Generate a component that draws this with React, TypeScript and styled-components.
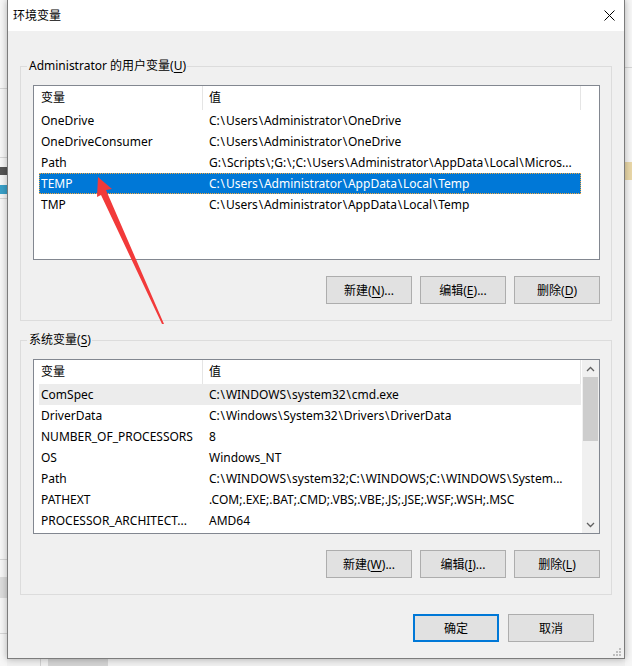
import styled, { createGlobalStyle } from 'styled-components'

const GlobalStyle = createGlobalStyle`
  html, body {
    margin: 0;
    padding: 0;
    background: #f2f2f2;
  }
  body {
    font-family: 'Noto Sans', 'Noto Sans CJK SC', sans-serif;
    font-size: 12px;
    color: #000;
  }
`

type RowState = 'selected' | 'inactive'

type EnvVar = {
  name: string
  value: string
  state?: RowState
}

type Label = {
  text: string
  hotkey: string
  suffix?: string
}

const userVars: EnvVar[] = [
  { name: 'OneDrive', value: 'C:\\Users\\Administrator\\OneDrive' },
  { name: 'OneDriveConsumer', value: 'C:\\Users\\Administrator\\OneDrive' },
  { name: 'Path', value: 'G:\\Scripts\\;G:\\;C:\\Users\\Administrator\\AppData\\Local\\Micros...' },
  { name: 'TEMP', value: 'C:\\Users\\Administrator\\AppData\\Local\\Temp', state: 'selected' },
  { name: 'TMP', value: 'C:\\Users\\Administrator\\AppData\\Local\\Temp' },
]

const systemVars: EnvVar[] = [
  { name: 'ComSpec', value: 'C:\\WINDOWS\\system32\\cmd.exe', state: 'inactive' },
  { name: 'DriverData', value: 'C:\\Windows\\System32\\Drivers\\DriverData' },
  { name: 'NUMBER_OF_PROCESSORS', value: '8' },
  { name: 'OS', value: 'Windows_NT' },
  { name: 'Path', value: 'C:\\WINDOWS\\system32;C:\\WINDOWS;C:\\WINDOWS\\System...' },
  { name: 'PATHEXT', value: '.COM;.EXE;.BAT;.CMD;.VBS;.VBE;.JS;.JSE;.WSF;.WSH;.MSC' },
  { name: 'PROCESSOR_ARCHITECT...', value: 'AMD64' },
]

const Desktop = styled.div`
  position: relative;
  display: grid;
  grid-template-columns: 7px 618px 7px;
  grid-template-rows: 659px 7px;
  width: 632px;
  height: 666px;
  overflow: hidden;
  background: #f4f4f4;
`

const LeftStrip = styled.div`
  grid-column: 1;
  grid-row: 1 / 3;
  display: flex;
  flex-direction: column;
  background: #f6f6f6;
`

const RightStrip = styled.div`
  grid-column: 3;
  grid-row: 1 / 3;
  display: flex;
  flex-direction: column;
  background: #f6f6f6;
`

const BottomStrip = styled.div`
  grid-column: 2;
  grid-row: 2;
  display: flex;
  background: #f0f0f0;
`

const StripLine = styled.div<{ $top: number }>`
  margin-top: ${p => p.$top}px;
  height: 1px;
  background: #d6d6d6;
  flex-shrink: 0;
`

const StripBlock = styled.div<{ $top: number; $height: number; $color: string }>`
  margin-top: ${p => p.$top}px;
  height: ${p => p.$height}px;
  background: ${p => p.$color};
  flex-shrink: 0;
`

const BottomBlock = styled.div<{ $left: number; $width: number; $color: string }>`
  margin-left: ${p => p.$left}px;
  width: ${p => p.$width}px;
  background: ${p => p.$color};
  flex-shrink: 0;
`

const WindowFrame = styled.div`
  grid-column: 2;
  grid-row: 1;
  position: relative;
  z-index: 1;
  display: flex;
  flex-direction: column;
  border: 1px solid #7c7c7c;
  border-top: none;
  background: #f0f0f0;
  box-shadow: 0 0 7px rgba(0, 0, 0, 0.3);
`

const TitleBar = styled.div`
  display: flex;
  align-items: center;
  justify-content: space-between;
  height: 31px;
  padding: 0 9px 0 5px;
  background: #fff;
  flex-shrink: 0;
`

const Title = styled.span`
  font-size: 12px;
  line-height: 16px;
`

const Body = styled.div`
  display: flex;
  flex-direction: column;
  flex: 1;
  padding: 27px 12px 16px 12px;
`

const Group = styled.fieldset`
  margin: 0;
  padding: 0;
  min-width: 0;
  border: 1px solid #dcdcdc;

  & + & {
    margin-top: 11px;
  }
`

const Legend = styled.legend`
  margin-left: 6px;
  padding: 0 1px 0 2px;
  font-size: 12px;
  line-height: 16px;
`

const GroupBody = styled.div`
  display: flex;
  flex-direction: column;
  gap: 16px;
  padding: 11px 11px 16px 12px;
`

const Hotkey = styled.span`
  text-decoration: underline;
  text-underline-offset: 2px;
`

const ListBox = styled.div`
  display: flex;
  height: 175px;
  box-sizing: border-box;
  border: 1px solid #828790;
  background: #fff;
  overflow: hidden;
`

const ListMain = styled.div`
  display: flex;
  flex-direction: column;
  flex: 1;
  min-width: 0;
`

const Header = styled.div`
  display: flex;
  height: 24px;
  flex-shrink: 0;
`

const HeaderCell = styled.div<{ $width: number; $pad: number }>`
  width: ${p => p.$width}px;
  box-sizing: border-box;
  padding-left: ${p => p.$pad}px;
  border-right: 1px solid #e5e5e5;
  line-height: 23px;
  flex-shrink: 0;
`

const Row = styled.div<{ $state?: RowState }>`
  display: grid;
  grid-template-columns: 168px 374px;
  width: 542px;
  height: 21px;
  margin-left: 5px;
  box-sizing: border-box;
  line-height: 21px;
  flex-shrink: 0;
  background: ${p => (p.$state === 'selected' ? '#0078d7' : p.$state === 'inactive' ? '#ececec' : 'transparent')};
  color: ${p => (p.$state === 'selected' ? '#fff' : '#000')};
  outline: ${p => (p.$state === 'selected' ? '1px dotted #f3a73f' : 'none')};
  outline-offset: -1px;
`

const Cell = styled.span`
  padding-left: 2px;
  white-space: nowrap;
  overflow: hidden;
`

// the dialog font draws a wider backslash than Noto Sans
const Slash = styled.span`
  padding: 0 0.8px;
`

const Scrollbar = styled.div`
  display: flex;
  flex-direction: column;
  align-items: center;
  width: 17px;
  flex-shrink: 0;
  background: #f0f0f0;
`

const ScrollArrow = styled.div`
  display: flex;
  align-items: center;
  justify-content: center;
  width: 17px;
  height: 17px;
  flex-shrink: 0;
`

const ScrollThumb = styled.div`
  width: 15px;
  height: 64px;
  background: #cdcdcd;
  flex-shrink: 0;
`

const ScrollTrack = styled.div`
  flex: 1;
`

const ButtonRow = styled.div`
  display: flex;
  justify-content: flex-end;
  gap: 8px;
`

const Footer = styled.div`
  display: flex;
  justify-content: flex-end;
  gap: 9px;
  margin-top: 19px;
  padding-right: 18px;
`

const Button = styled.button<{ $primary?: boolean }>`
  width: 86px;
  height: 28px;
  padding: 0;
  box-sizing: border-box;
  border: ${p => (p.$primary ? '2px solid #0078d7' : '1px solid #adadad')};
  background: #e1e1e1;
  font-family: inherit;
  font-size: 12px;
  color: #000;
`

const Grip = styled.svg`
  position: absolute;
  right: 3px;
  bottom: 2px;
`

const ArrowLayer = styled.svg`
  position: absolute;
  left: 0;
  top: 0;
  z-index: 3;
  pointer-events: none;
`

function LabelText({ label }: { label: Label }) {
  return (
    <>
      {label.text}(<Hotkey>{label.hotkey}</Hotkey>){label.suffix}
    </>
  )
}

function PathText({ value }: { value: string }) {
  const parts = value.split('\\')
  return (
    <>
      {parts.map((part, i) => (
        <span key={i}>
          {part}
          {i < parts.length - 1 && <Slash>\</Slash>}
        </span>
      ))}
    </>
  )
}

function Chevron({ up }: { up?: boolean }) {
  return (
    <svg width="9" height="6" viewBox="0 0 9 6">
      <polyline
        points={up ? '1,5 4.5,1.5 8,5' : '1,1 4.5,4.5 8,1'}
        fill="none"
        stroke="#606060"
        strokeWidth="1.3"
      />
    </svg>
  )
}

function VarList({ vars, scroll }: { vars: EnvVar[]; scroll?: boolean }) {
  return (
    <ListBox>
      <ListMain>
        <Header>
          <HeaderCell $width={169} $pad={7}>变量</HeaderCell>
          <HeaderCell $width={378} $pad={6}>值</HeaderCell>
        </Header>
        {vars.map(v => (
          <Row key={v.name + v.value} $state={v.state}>
            <Cell>{v.name}</Cell>
            <Cell>
              <PathText value={v.value} />
            </Cell>
          </Row>
        ))}
      </ListMain>
      {scroll && (
        <Scrollbar>
          <ScrollArrow>
            <Chevron up />
          </ScrollArrow>
          <ScrollThumb />
          <ScrollTrack />
          <ScrollArrow>
            <Chevron />
          </ScrollArrow>
        </Scrollbar>
      )}
    </ListBox>
  )
}

function VarGroup({ legend, vars, buttons, scroll }: { legend: Label; vars: EnvVar[]; buttons: Label[]; scroll?: boolean }) {
  return (
    <Group>
      <Legend>
        <LabelText label={legend} />
      </Legend>
      <GroupBody>
        <VarList vars={vars} scroll={scroll} />
        <ButtonRow>
          {buttons.map(b => (
            <Button key={b.hotkey}>
              <LabelText label={b} />
            </Button>
          ))}
        </ButtonRow>
      </GroupBody>
    </Group>
  )
}

export default function App() {
  return (
    <>
      <GlobalStyle />
      <Desktop>
        <LeftStrip>
          <StripLine $top={88} />
          <StripLine $top={68} />
          <StripBlock $top={9} $height={8} $color="#555" />
          <StripBlock $top={10} $height={9} $color="#3aa0c8" />
          <StripLine $top={4} />
          <StripLine $top={360} />
          <StripBlock $top={17} $height={21} $color="#dcdcdc" />
          <StripLine $top={35} />
        </LeftStrip>

        <WindowFrame>
          <TitleBar>
            <Title>环境变量</Title>
            <svg width="11" height="11" viewBox="0 0 11 11">
              <path d="M0.5 0.5 L10.5 10.5 M10.5 0.5 L0.5 10.5" stroke="#000" strokeWidth="1" />
            </svg>
          </TitleBar>

          <Body>
            <VarGroup
              legend={{ text: 'Administrator 的用户变量', hotkey: 'U' }}
              vars={userVars}
              buttons={[
                { text: '新建', hotkey: 'N', suffix: '...' },
                { text: '编辑', hotkey: 'E', suffix: '...' },
                { text: '删除', hotkey: 'D' },
              ]}
            />
            <VarGroup
              legend={{ text: '系统变量', hotkey: 'S' }}
              vars={systemVars}
              scroll
              buttons={[
                { text: '新建', hotkey: 'W', suffix: '...' },
                { text: '编辑', hotkey: 'I', suffix: '...' },
                { text: '删除', hotkey: 'L' },
              ]}
            />
            <Footer>
              <Button $primary>确定</Button>
              <Button>取消</Button>
            </Footer>
          </Body>

          <Grip width="8" height="8" viewBox="0 0 8 8">
            <rect x="6" y="0" width="2" height="2" fill="#bdbdbd" />
            <rect x="3" y="3" width="2" height="2" fill="#bdbdbd" />
            <rect x="6" y="3" width="2" height="2" fill="#bdbdbd" />
            <rect x="0" y="6" width="2" height="2" fill="#bdbdbd" />
            <rect x="3" y="6" width="2" height="2" fill="#bdbdbd" />
            <rect x="6" y="6" width="2" height="2" fill="#bdbdbd" />
          </Grip>
        </WindowFrame>

        <RightStrip>
          <StripLine $top={67} />
          <StripBlock $top={94} $height={18} $color="#e9d7a8" />
        </RightStrip>

        <BottomStrip>
          <BottomBlock $left={33} $width={1} $color="#d0d0d0" />
          <BottomBlock $left={7} $width={60} $color="#d3d3d3" />
        </BottomStrip>

        <ArrowLayer width="632" height="666" viewBox="0 0 632 666">
          <polygon
            points="98,177 112,189 106,190 164,324 162,324 101,195 97,197"
            fill="#f23a3a"
          />
        </ArrowLayer>
      </Desktop>
    </>
  )
}
